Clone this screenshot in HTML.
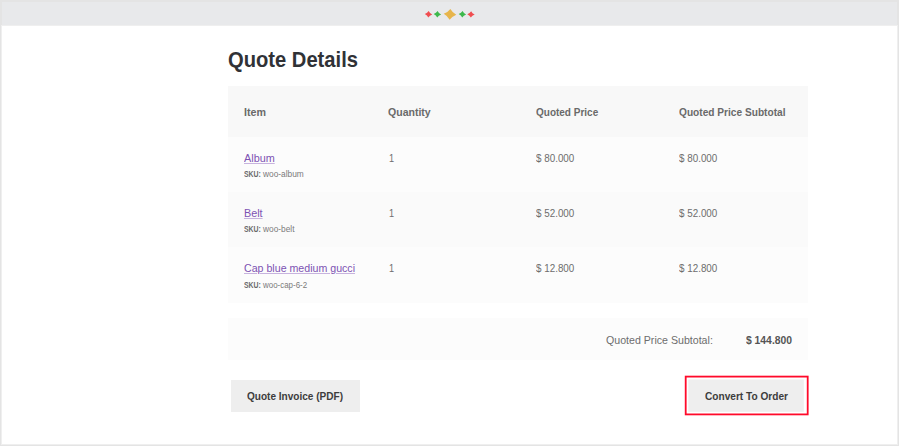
<!DOCTYPE html>
<html>
<head>
<meta charset="utf-8">
<style>
html,body{margin:0;padding:0;}
body{width:899px;height:446px;overflow:hidden;background:#e4e4e4;position:relative;font-family:"Liberation Sans",sans-serif;}
#page{position:absolute;left:2px;top:26px;width:895px;height:418px;background:#ffffff;box-shadow:0 0 0 1px #efefef;}
.a{position:absolute;white-space:nowrap;line-height:1;transform-origin:0 0;}
.bg{position:absolute;}
.t{color:#303236;font-weight:bold;}
.h{color:#6a6a6a;font-weight:bold;font-size:11.5px;}
.r{color:#6d6d6d;font-size:11.5px;}
.l{color:#7d52b3;font-size:11.5px;text-decoration:underline;text-decoration-color:#c7b3de;text-underline-offset:0.5px;}
.s{color:#7a7a7a;font-size:8.5px;}
.s i{font-style:normal;display:inline-block;transform-origin:0 0;}
.s b{color:#6a6a6a;display:inline-block;transform:scaleX(0.81);transform-origin:0 0;margin-right:-3.9px;}
.btn{position:absolute;background:#eeeeee;}
.bt{color:#3d3d3d;font-weight:bold;font-size:11.5px;}
</style>
</head>
<body>
<div class="bg" style="left:2px;top:2px;width:895px;height:23px;background:#e8e9eb;border-bottom:1px solid #e4e5e5"></div>
<div id="page"></div>
<svg style="position:absolute;left:0;top:0" width="899" height="26">
  <path fill="#f04d50" transform="rotate(3 428.5 14.2)" d="M428.5 11.00 Q429.68 13.18 432.20 14.2 Q429.68 15.22 428.5 17.40 Q427.32 15.22 424.80 14.2 Q427.32 13.18 428.5 11.00Z"/>
  <path fill="#3db84c" transform="rotate(3 437.4 14.2)" d="M437.4 11.00 Q438.58 13.18 441.10 14.2 Q438.58 15.22 437.4 17.40 Q436.22 15.22 433.70 14.2 Q436.22 13.18 437.4 11.00Z"/>
  <path fill="#e7b54c" transform="rotate(4 450 14.3)" d="M450 8.90 Q452.33 12.30 456.30 14.3 Q452.33 16.30 450 19.70 Q447.67 16.30 443.70 14.3 Q447.67 12.30 450 8.90Z"/>
  <path fill="#3db84c" transform="rotate(3 462.4 14.3)" d="M462.4 11.10 Q463.58 13.28 466.10 14.3 Q463.58 15.32 462.4 17.50 Q461.22 15.32 458.70 14.3 Q461.22 13.28 462.4 11.10Z"/>
  <path fill="#f04d50" transform="rotate(3 471 14.4)" d="M471 11.20 Q472.18 13.38 474.70 14.4 Q472.18 15.42 471 17.60 Q469.82 15.42 467.30 14.4 Q469.82 13.38 471 11.20Z"/>
</svg>

<div class="a t" style="left:228px;top:48.5px;font-size:22.5px;transform:scaleX(0.896)">Quote Details</div>

<div class="bg" style="left:228px;top:86px;width:580px;height:50.5px;background:#f8f8f8"></div>
<div class="bg" style="left:228px;top:136.5px;width:580px;height:55px;background:#fcfcfc"></div>
<div class="bg" style="left:228px;top:191.5px;width:580px;height:55px;background:#fafafa"></div>
<div class="bg" style="left:228px;top:246.5px;width:580px;height:56px;background:#fcfcfc"></div>
<div class="bg" style="left:228px;top:318px;width:580px;height:42px;background:#fcfcfc"></div>

<div class="a h" style="left:244px;top:106.5px;transform:scaleX(0.93)">Item</div>
<div class="a h" style="left:388px;top:106.5px;transform:scaleX(0.916)">Quantity</div>
<div class="a h" style="left:536px;top:106.5px;transform:scaleX(0.869)">Quoted Price</div>
<div class="a h" style="left:679px;top:106.5px;transform:scaleX(0.882)">Quoted Price Subtotal</div>

<div class="a l" style="left:244px;top:152.5px;transform:scaleX(0.942)">Album</div>
<div class="a s" style="left:244px;top:169.5px"><b>SKU:</b> <i style="transform:scaleX(0.98)">woo-album</i></div>
<div class="a r" style="left:388.5px;top:153px;transform:scaleX(0.8)">1</div>
<div class="a r" style="left:536px;top:153px;transform:scaleX(0.856)">$ 80.000</div>
<div class="a r" style="left:679px;top:153px;transform:scaleX(0.856)">$ 80.000</div>

<div class="a l" style="left:244px;top:207.5px;transform:scaleX(0.939)">Belt</div>
<div class="a s" style="left:244px;top:224.5px"><b>SKU:</b> <i style="transform:scaleX(0.98)">woo-belt</i></div>
<div class="a r" style="left:388.5px;top:208px;transform:scaleX(0.8)">1</div>
<div class="a r" style="left:536px;top:208px;transform:scaleX(0.856)">$ 52.000</div>
<div class="a r" style="left:679px;top:208px;transform:scaleX(0.856)">$ 52.000</div>

<div class="a l" style="left:244px;top:262.5px;transform:scaleX(0.924)">Cap blue medium gucci</div>
<div class="a s" style="left:244px;top:280.8px"><b>SKU:</b> <i style="transform:scaleX(0.934)">woo-cap-6-2</i></div>
<div class="a r" style="left:388.5px;top:263px;transform:scaleX(0.8)">1</div>
<div class="a r" style="left:536px;top:263px;transform:scaleX(0.856)">$ 12.800</div>
<div class="a r" style="left:679px;top:263px;transform:scaleX(0.856)">$ 12.800</div>

<div class="a r" style="left:606px;top:334.6px;font-size:11.8px;transform:scaleX(0.9)">Quoted Price Subtotal:</div>
<div class="a" style="left:746px;top:334.7px;font-size:11px;font-weight:bold;color:#555;transform:scaleX(0.94)">$ 144.800</div>

<div class="btn" style="left:231px;top:379.5px;width:129px;height:32.5px;"></div>
<div class="a bt" style="left:247.3px;top:391.3px;transform:scaleX(0.874)">Quote Invoice (PDF)</div>

<svg style="position:absolute;left:0;top:0;overflow:visible" width="899" height="446"><rect x="685.7" y="376.6" width="122" height="37.8" fill="none" stroke="#ff0a2a" stroke-width="1.8"/><rect x="688.3" y="379.5" width="115.5" height="32.3" fill="#eeeeee"/></svg>
<div class="a bt" style="left:705px;top:391.4px;transform:scaleX(0.88)">Convert To Order</div>
</body>
</html>
